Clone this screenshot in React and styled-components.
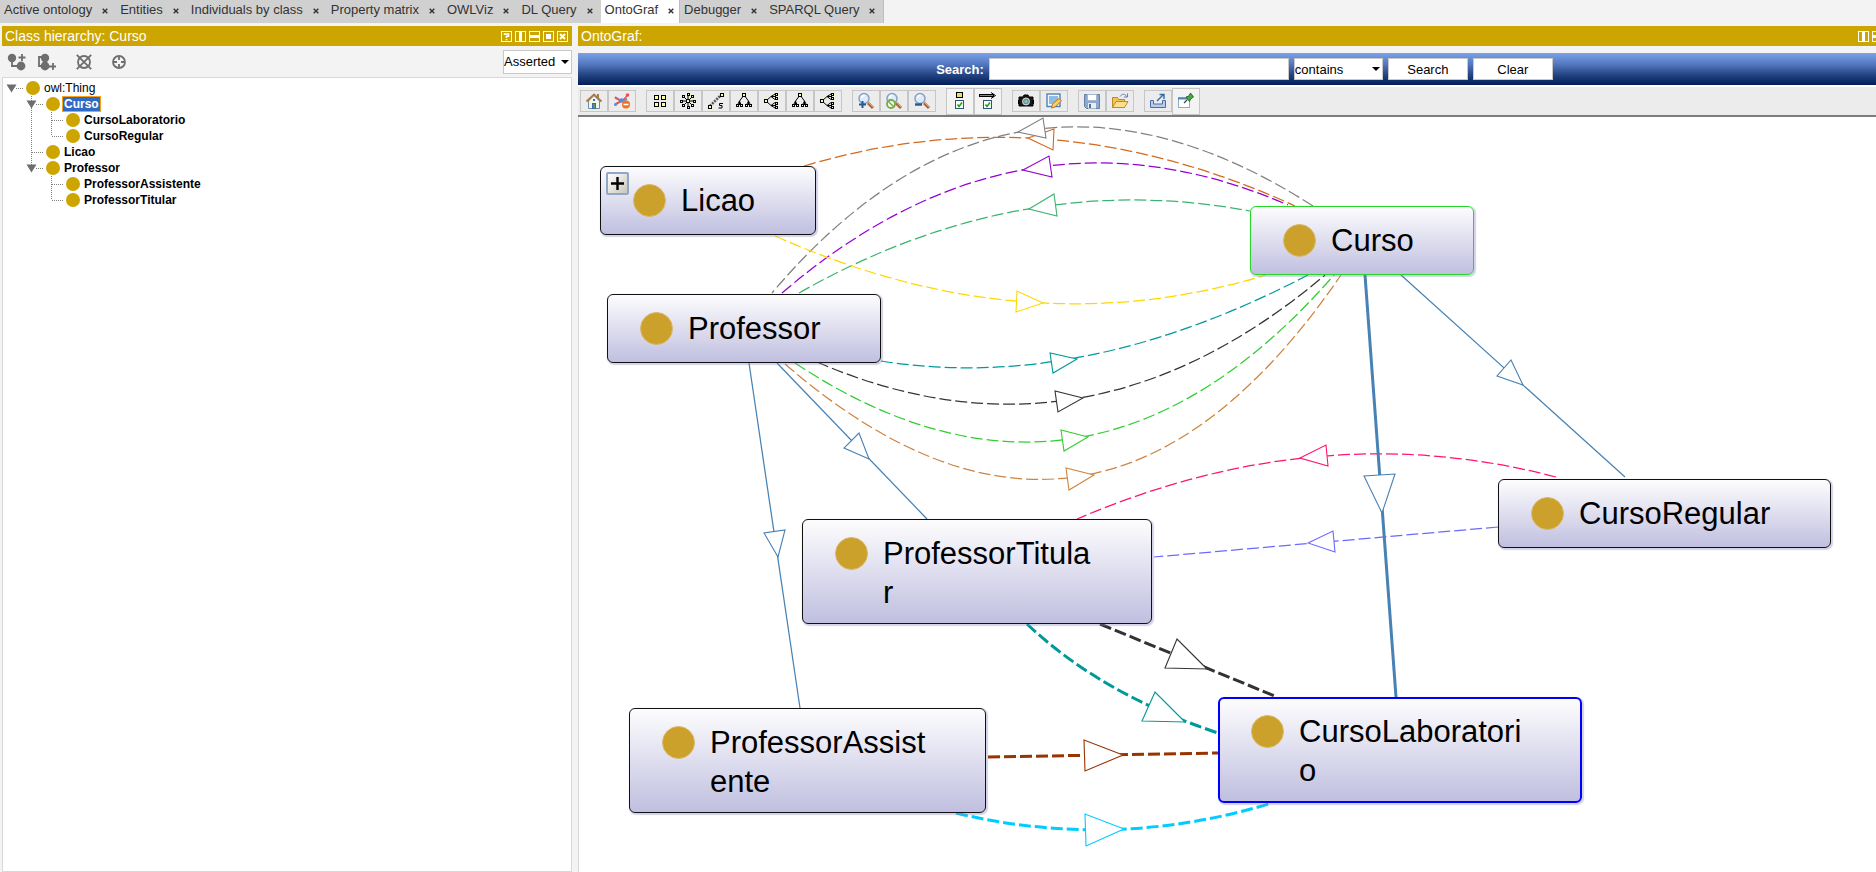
import React from "react";
import styled, { createGlobalStyle, css } from "styled-components";

const GlobalStyle = createGlobalStyle`
  *, *::before, *::after { box-sizing: border-box; }
  body { margin: 0; background: #f3f3f3; overflow: hidden; }
  body, button, input, select { font-family: "Liberation Sans", Arial, sans-serif; }
`;

const GOLD = "#cda500";

/* The workspace is a little wider than the window, so its right edge runs off screen. */
const Workspace = styled.div`
  display: flex;
  flex-direction: column;
  gap: 3px;
  width: calc(100% + 39px);
  height: 100vh;
`;

const TabBar = styled.nav`
  display: flex;
  height: 23px;
`;

const Tab = styled.div`
  display: flex;
  align-items: center;
  gap: 10px;
  padding: 0 ${(p) => (p.$active ? 5 : 8)}px 4px 4px;
  background: ${(p) => (p.$active ? "#fff" : "#d0d0d0")};
  ${(p) => (p.$last || p.$active) && css`border-right: 1px solid #bdbdbd;`}
`;

const TabLink = styled.a`
  color: #333;
  font-size: 13px;
  line-height: 16px;
  text-decoration: none;
  white-space: nowrap;
`;

const TabClose = styled.button`
  display: flex;
  padding: 2px 0 0;
  border: 0;
  background: none;
`;

const Panels = styled.main`
  display: flex;
  flex: 1;
  gap: 6px;
  min-height: 0;
  padding-left: 2px;
`;

const HierarchyPanel = styled.section`
  display: flex;
  flex-direction: column;
  flex: 0 0 570px;
`;

const GraphPanel = styled.section`
  display: flex;
  flex-direction: column;
  flex: 1;
  min-width: 0;
`;

const PanelHeader = styled.header`
  display: flex;
  flex: none;
  align-items: center;
  justify-content: space-between;
  height: 20px;
  padding: 0 4px 0 3px;
  background: ${GOLD};
`;

const PanelTitle = styled.h2`
  margin: 0;
  color: #fff;
  font-size: 14px;
  font-weight: 400;
  line-height: 20px;
`;

const HeaderButtons = styled.div`
  display: flex;
  gap: 3px;
`;

const PlainButton = styled.button`
  display: flex;
  padding: 0;
  border: 0;
  background: none;
`;

const HierarchyTools = styled.div`
  display: flex;
  flex: none;
  align-items: center;
  justify-content: space-between;
  height: 31px;
  padding-left: 5px;
`;

const ToolCluster = styled.div`
  display: flex;
  align-items: center;
  gap: ${(p) => p.$gap}px;
`;

const SelectBox = styled.span`
  display: grid;
  align-items: center;
  width: ${(p) => p.$width}px;
  height: ${(p) => p.$height}px;
  border: 1px solid #c8c8c8;
  background: #fff;
  & > * { grid-area: 1 / 1; }
  & > svg { justify-self: end; margin-right: 1px; pointer-events: none; }
`;

const Select = styled.select`
  appearance: none;
  width: 100%;
  height: 100%;
  padding: 0;
  border: 0;
  background: none;
  color: #000;
  font-size: 13px;
`;

const TreeView = styled.div`
  flex: 1;
  padding: 2px 1px;
  border: 1px solid #d8d8d8;
  background: #fff;
`;

const TreeRow = styled.div`
  display: flex;
  align-items: center;
  height: 16px;
`;

const TreeDot = styled.span`
  width: 14px;
  height: 14px;
  margin: 0 2px;
  border-radius: 50%;
  background: ${GOLD};
`;

const TreeLabel = styled.span`
  padding: 0 1px;
  border: 1px solid transparent;
  font-size: 12px;
  font-weight: ${(p) => (p.$bold ? 700 : 400)};
  line-height: 14px;
  ${(p) => p.$selected && css`
    border-color: #f5a11a;
    background: #316ac5;
    color: #fff;
  `}
`;

const SearchBar = styled.form`
  display: flex;
  flex: none;
  align-items: center;
  justify-content: center;
  gap: 5px;
  height: 32px;
  margin-top: 7px;
  padding-right: 4px;
  background: linear-gradient(#7aa2e8, #5478c0 35%, #22427f 70%, #001d58);
`;

const SearchLabel = styled.label`
  color: #fff;
  font-size: 13px;
  font-weight: 700;
`;

const SearchInput = styled.input`
  width: 300px;
  height: 22px;
  border: 1px solid #c8c8c8;
  background: #fff;
  font-size: 13px;
`;

const SearchButton = styled.button`
  width: 80px;
  height: 22px;
  padding: 0;
  border: 1px solid #c8c8c8;
  background: #fff;
  color: #000;
  font-size: 13px;
`;

const GraphToolbar = styled.div`
  display: flex;
  flex: none;
  align-items: center;
  gap: 10px;
  height: 32px;
  padding-left: 2px;
  border-top: 2px solid #fff;
  border-bottom: 2px solid #7c7c7c;
  background: #ececec;
`;

const ToolGroup = styled.div`
  display: flex;
  align-items: center;
`;

const ToolButton = styled.button`
  display: flex;
  align-items: center;
  justify-content: center;
  width: 28px;
  height: ${(p) => (p.$pressed ? 27 : 22)}px;
  padding: 0;
  border: 1px solid #c6c6c6;
  background: ${(p) => (p.$pressed ? "#f3f3f3" : "#ececec")};
`;

const Canvas = styled.div`
  position: relative;
  flex: 1;
  overflow: hidden;
  border-left: 1px solid #d8d8d8;
  background: #fff;
`;

const EdgeLayer = styled.svg`
  display: block;
  width: 100%;
  height: 100%;
`;

const GraphNode = styled.article`
  position: absolute;
  left: ${(p) => p.$x}px;
  top: ${(p) => p.$y}px;
  display: flex;
  align-items: flex-start;
  gap: 15px;
  width: ${(p) => p.$w}px;
  height: ${(p) => p.$h}px;
  padding: 14px 53px 0 32px;
  border: 1px solid ${(p) => p.$border};
  border-radius: 6px;
  background: linear-gradient(#fdfdfe, #c0bfe0);
  box-shadow: 1px 1px 1px 1px rgba(130, 130, 190, 0.35);
  ${(p) => p.$thick && css`
    padding: 13px 52px 0 31px;
    border-width: 2px;
  `}
`;

const NodeDot = styled.span`
  flex: none;
  width: 33px;
  height: 33px;
  margin-top: 3px;
  border-radius: 50%;
  border: 1px solid #d8b968;
  background: #cba02b;
`;

const NodeName = styled.span`
  flex: 1;
  color: #000;
  font-size: 31px;
  line-height: 39px;
  word-break: break-all;
`;

const ExpandButton = styled.button`
  position: absolute;
  left: 5px;
  top: 5px;
  display: flex;
  align-items: center;
  justify-content: center;
  width: 23px;
  height: 23px;
  padding: 0;
  border: 2px solid #8fa9c4;
  border-radius: 2px;
  background: linear-gradient(135deg, #fff, #cbc6bd);
`;

/* ---------- icons ---------- */

const Caret = () => (
  <svg width="10" height="6" viewBox="0 0 10 6"><path d="M1 1h8L5 5z" fill="#000" /></svg>
);

const CloseGlyph = () => (
  <svg width="6" height="6" viewBox="0 0 6 6"><path d="M.7 .7l4.6 4.6M5.3 .7L.7 5.3" stroke="#333" strokeWidth="1.4" /></svg>
);

const headerShapes = {
  help: <path d="M3.5 4V3h4v2.2H5.5V7M5.5 8v1.2" fill="none" stroke="#fff" strokeWidth="1.6" />,
  splitV: <path d="M4 1h3v9H4z" fill="#fff" />,
  splitH: <path d="M1 4h9v3H1z" fill="#fff" />,
  max: <path d="M3 3h5v5H3z" fill="#fff" />,
  close: <path d="M3 3l5 5M8 3L3 8" stroke="#fff" strokeWidth="2" />,
};

const HeaderIcon = ({ name }) => (
  <svg width="11" height="11" viewBox="0 0 11 11">
    <rect x=".5" y=".5" width="10" height="10" fill="none" stroke="#fff" />
    {headerShapes[name]}
  </svg>
);

const G = "#6e6e6e";
const AddSubIcon = () => (
  <svg width="20" height="18" viewBox="0 0 20 18">
    <circle cx="5" cy="5" r="4.2" fill={G} /><circle cx="14" cy="13" r="4.4" fill={G} />
    <path d="M5 5v8h8M15 1v7M11.5 4.5h7" fill="none" stroke={G} strokeWidth="1.8" />
  </svg>
);
const AddSiblingIcon = () => (
  <svg width="20" height="18" viewBox="0 0 20 18">
    <circle cx="8" cy="5" r="4.2" fill={G} /><circle cx="8" cy="13" r="4.4" fill={G} />
    <path d="M7 4H2v9h6M16 10v7M11 13.5h8" fill="none" stroke={G} strokeWidth="1.8" />
  </svg>
);
const DeleteIcon = () => (
  <svg width="16" height="16" viewBox="0 0 16 16" fill="none" stroke={G} strokeWidth="1.8">
    <circle cx="8" cy="8" r="6" /><path d="M.8 .8l14.4 14.4M15.2 .8L.8 15.2" />
  </svg>
);
const TargetIcon = () => (
  <svg width="16" height="16" viewBox="0 0 16 16" fill="none" stroke={G} strokeWidth="1.8">
    <circle cx="8" cy="8" r="6" /><path d="M8 2v4M8 10v4M2 8h4M10 8h4" />
  </svg>
);

const Cell = ({ x, y, s = 3 }) => (
  <rect x={x + 0.5} y={y + 0.5} width={s} height={s} fill="#ffff9c" stroke="#000" />
);
const Icon = ({ children }) => (
  <svg width="18" height="18" viewBox="0 0 18 18" fill="none">{children}</svg>
);

const TreeDown = (
  <Icon>
    <path d="M9 3L4.5 9v4M9 3l4.5 6v4M4.5 9L2 14M4.500 9l2 5M13.5 9l-2.5 5M13.5 9l2.5 5" stroke="#000" />
    <Cell x={7} y={1} /><Cell x={1} y={12} s={2} /><Cell x={5} y={12} s={2} /><Cell x={10} y={12} s={2} /><Cell x={14} y={12} s={2} />
  </Icon>
);
const TreeRight = (
  <Icon>
    <path d="M3 9l5-4.500h5M3 9l5 4.500h5M8 4.500l4-2.500M8 4.500l4 3M8 13.500l4-3M8 13.500l4 2.500" stroke="#000" />
    <Cell x={1} y={7} /><Cell x={12} y={1} s={2} /><Cell x={12} y={5} s={2} /><Cell x={12} y={10} s={2} /><Cell x={12} y={14} s={2} />
  </Icon>
);
const Magnifier = ({ children }) => (
  <Icon>
    <path d="M11 11l5 5" stroke="#a8683c" strokeWidth="3" /><path d="M11 10l5 5" stroke="#e0a878" />
    <circle cx="7" cy="6.5" r="5" fill="#dcecfc" stroke="#8aa0c4" strokeWidth="1.5" />
    <path d="M4.500 6a3 3 0 0 1 3-2.500" stroke="#fff" strokeWidth="1.5" />
    {children}
  </Icon>
);
const CheckBoxShape = () => (
  <>
    <rect x="4.5" y="8.5" width="8" height="8" fill="#fff" stroke="#2c5878" />
    <path d="M6.500 12.500l1.500 2 3-4" stroke="#18a018" strokeWidth="1.5" />
  </>
);

const toolIcons = {
  home: (
    <Icon>
      <path d="M3.500 9v7.500h11V9L9 3.500z" fill="#f4f4e8" stroke="#6c8cb0" />
      <path d="M1.500 9.500L9 2.500l7.500 7" stroke="#a87848" strokeWidth="1.8" />
      <path d="M13 2v4" stroke="#a87848" strokeWidth="2" />
      <rect x="7.5" y="11.5" width="3" height="5" fill="#5c9c50" stroke="#3c6ca0" /><rect x="8" y="7" width="2" height="2" fill="#3c78b4" />
    </Icon>
  ),
  unlink: (
    <Icon>
      <path d="M2 5l6 4 6-2M2 13l6-4" stroke="#5c8cd8" strokeWidth="2" />
      <path d="M2 12l7-3 6-6M9 9L2 6" stroke="#f05050" strokeWidth="1.5" />
      <circle cx="2.5" cy="12.5" r="1.5" fill="#5c8cd8" /><circle cx="14.5" cy="3" r="1.8" fill="#f05050" /><circle cx="8.5" cy="8.5" r="2.2" fill="#5c8cd8" />
      <circle cx="13" cy="12.5" r="4" fill="#f07020" /><path d="M10.500 12.500h5" stroke="#fff" strokeWidth="1.6" />
    </Icon>
  ),
  grid: <Icon><Cell x={3} y={3} s={4} /><Cell x={10} y={3} s={4} /><Cell x={3} y={10} s={4} /><Cell x={10} y={10} s={4} /></Icon>,
  radial: (
    <Icon>
      <path d="M9 2v14M2 9h14M4 4l10 10M14 4L4 14" stroke="#000" />
      <Cell x={7} y={7} s={3} />
      <Cell x={8} y={1} s={2} /><Cell x={8} y={14} s={2} /><Cell x={1} y={8} s={2} /><Cell x={14} y={8} s={2} />
      <Cell x={3} y={3} s={2} /><Cell x={12} y={3} s={2} /><Cell x={3} y={12} s={2} /><Cell x={12} y={12} s={2} />
    </Icon>
  ),
  spring: (
    <Icon>
      <path d="M3 14L14 3" stroke="#555" strokeWidth="2.6" strokeDasharray="2 1" />
      <Cell x={1} y={13} /><Cell x={13} y={1} />
      <path d="M16 11.500h-3.500v2H15v2.500h-3.500" stroke="#000" />
    </Icon>
  ),
  treeDown: TreeDown,
  treeRight: TreeRight,
  zoomIn: <Magnifier><path d="M5.500 9v7M2 12.500h7" stroke="#245c90" strokeWidth="2" /></Magnifier>,
  zoomReset: <Magnifier><circle cx="6" cy="12" r="4" fill="#f4faec" stroke="#78a848" strokeWidth="1.8" /><path d="M3.500 9.500l5 5" stroke="#78a848" strokeWidth="1.5" /></Magnifier>,
  zoomOut: <Magnifier><path d="M2 12.500h7" stroke="#245c90" strokeWidth="2.4" /></Magnifier>,
  nodeFilter: <Icon><rect x="5.5" y=".5" width="6" height="5" fill="#e8e060" stroke="#000" /><CheckBoxShape /></Icon>,
  arcFilter: <Icon><path d="M0 3.500h15" stroke="#000" strokeWidth="3" /><path d="M1 3.500h13" stroke="#20a8e0" /><path d="M12 .5l4.500 3-4.500 3" stroke="#000" /><CheckBoxShape /></Icon>,
  camera: (
    <Icon>
      <path d="M2 5h4l1-2h4l1 2h4v9H2z" fill="#181818" stroke="#000" /><path d="M1.500 8v4M16.500 8v4" stroke="#000" />
      <circle cx="9" cy="9.5" r="3.5" fill="#888" stroke="#ddd" /><circle cx="9" cy="9.5" r="1.5" fill="#50d8e0" />
    </Icon>
  ),
  editImage: (
    <Icon>
      <rect x="2" y="2" width="13" height="12.5" fill="#f4f8fc" stroke="#4c80bc" strokeWidth="1.4" /><path d="M4 4h9v8H4z" fill="#8cbce8" />
      <path d="M6.500 16l1-4 6.500-5.500 2.500 2.500-6.500 6z" fill="#fccc60" stroke="#b87828" />
    </Icon>
  ),
  save: (
    <Icon>
      <path d="M1.500 2.500h15v14h-13l-2-2z" fill="#8ca8d0" stroke="#64809c" />
      <rect x="4.5" y="2.5" width="9" height="6" fill="#fff" stroke="#a4b8d0" /><rect x="5" y="11" width="8" height="5.5" fill="#e8eef4" /><path d="M7 12v4" stroke="#58708c" strokeWidth="2" />
    </Icon>
  ),
  open: (
    <Icon>
      <path d="M1.500 15.500v-10h5l1 2h6v8z" fill="#f4c458" stroke="#c08828" /><path d="M1.500 15.500L5 9.500h12l-3.500 6z" fill="#fce08c" stroke="#c08828" />
      <path d="M9 4.500c2-3 5-3 6.500 0M16.500 1.500v3.500h-3.500" stroke="#5c80b0" />
    </Icon>
  ),
  exportGraph: (
    <Icon>
      <path d="M4.500 8.500h-3v7h15v-7h-3v3.500h-9z" fill="#b8ccec" stroke="#4c6cac" />
      <path d="M8 9l6-6M10.500 2.500H15V7" stroke="#2c6ca8" strokeWidth="1.4" />
    </Icon>
  ),
  pin: (
    <Icon>
      <rect x="1.5" y="5.5" width="11" height="10" fill="#fff" stroke="#8cacc8" /><path d="M1 6.500h11" stroke="#4c88c0" strokeWidth="2" />
      <path d="M7 11l3-3" stroke="#444" strokeWidth="1.3" /><path d="M9 5l3.500 4.500 1-2.500 3-2-3-4-1.500 3z" fill="#48a848" stroke="#287028" />
    </Icon>
  ),
};

const toolGroups = [
  [["home", "Home"], ["unlink", "Clear links"]],
  [["grid", "Grid"], ["radial", "Radial"], ["spring", "Spring"], ["treeDown", "Vertical tree"], ["treeRight", "Horizontal tree"], ["treeDown", "Vertical directed"], ["treeRight", "Horizontal directed"]],
  [["zoomIn", "Zoom in"], ["zoomReset", "No zoom"], ["zoomOut", "Zoom out"]],
  [["nodeFilter", "Node types", true], ["arcFilter", "Arc types", true]],
  [["camera", "Snapshot"], ["editImage", "Edit image"]],
  [["save", "Save"], ["open", "Open"]],
  [["exportGraph", "Export"], ["pin", "Pin tooltips", true]],
];

/* ---------- class tree ---------- */

const DOTS = { stroke: "#808080", strokeDasharray: "1 1" };
const Guide = ({ kind }) => {
  const open = kind.startsWith("open");
  const upper = ["openMid", "openLast", "tee", "ell", "vert"].includes(kind);
  const lower = ["openMid", "tee", "vert"].includes(kind);
  const across = open || kind === "tee" || kind === "ell";
  return (
    <svg width="20" height="16" viewBox="0 0 20 16" shapeRendering={open ? "auto" : "crispEdges"}>
      {upper && <path d="M7.500 0v8" {...DOTS} />}
      {lower && <path d="M7.500 8v8" {...DOTS} />}
      {across && <path d={`M${open ? 12 : 8} 8.500H19`} {...DOTS} />}
      {open && <path d="M2.500 4.500h10L7.500 12.500z" fill="#6e6e6e" />}
    </svg>
  );
};

const treeRows = [
  { label: "owl:Thing", guides: ["openRoot"], plain: true },
  { label: "Curso", guides: ["blank", "openMid"], selected: true },
  { label: "CursoLaboratorio", guides: ["blank", "vert", "tee"] },
  { label: "CursoRegular", guides: ["blank", "vert", "ell"] },
  { label: "Licao", guides: ["blank", "tee"] },
  { label: "Professor", guides: ["blank", "openLast"] },
  { label: "ProfessorAssistente", guides: ["blank", "blank", "tee"] },
  { label: "ProfessorTitular", guides: ["blank", "blank", "ell"] },
];

/* ---------- graph ---------- */

const ORIGIN = { x: 579, y: 117 };

const nodes = [
  { name: "Licao", x: 600, y: 166, w: 216, h: 69, expandable: true },
  { name: "Professor", x: 607, y: 294, w: 274, h: 69 },
  { name: "Curso", x: 1250, y: 206, w: 224, h: 69, border: "#28d828" },
  { name: "CursoRegular", x: 1498, y: 479, w: 333, h: 69 },
  { name: "ProfessorTitular", x: 802, y: 519, w: 350, h: 105 },
  { name: "ProfessorAssistente", x: 629, y: 708, w: 357, h: 105 },
  { name: "CursoLaboratorio", x: 1218, y: 697, w: 364, h: 106, border: "#0000ff", thick: true },
];

/* d: the line; head: tip first, then the two corners of the arrow's base */
const edges = [
  { color: "#d2691e", dash: true, d: "M804 166Q1049 93 1295 206", head: "1028,138 1054,129 1053,150" },
  { color: "#808080", dash: true, d: "M1313 206Q1010 12 772 293", head: "1018,132 1043,118 1046,138" },
  { color: "#9400d3", dash: true, d: "M782 293Q1020 89 1288 205", head: "1023,170 1049,156 1052,177" },
  { color: "#3cb371", dash: true, d: "M799 293Q1019 168 1250 211", head: "1029,209 1054,194 1057,216" },
  { color: "#ffd700", dash: true, d: "M775 236Q1026 348 1266 275", head: "1043,303 1017,291 1016,312" },
  { color: "#009999", dash: true, d: "M881 361Q1082 393 1308 275", head: "1077,359 1050,353 1053,373" },
  { color: "#333333", dash: true, d: "M817 362Q1085 478 1325 275", head: "1083,398 1055,391 1058,412" },
  { color: "#32cd32", dash: true, d: "M795 363Q1088 557 1334 275", head: "1088,437 1061,430 1064,451" },
  { color: "#cd853f", dash: true, d: "M785 364Q1096 633 1341 275", head: "1094,475 1066,468 1069,490" },
  { color: "#4682b4", d: "M777 363L927 519", head: "869,459 859,433 844,448" },
  { color: "#4682b4", d: "M749 363L800 708", head: "778,557 764,533 785,530" },
  { color: "#4682b4", d: "M1401 275L1625 477", head: "1523,385 1511,360 1497,376" },
  { color: "#ff1470", dash: true, d: "M1556 477Q1320 415 1077 519", head: "1300,458 1326,445 1328,466" },
  { color: "#6a6aff", dash: true, d: "M1498 527L1154 557", head: "1308,543 1333,531 1335,552" },
  { color: "#4682b4", thick: true, d: "M1365 275L1396 697", head: "1382,513 1364,476 1395,474" },
  { color: "#333333", dash: true, thick: true, d: "M1100 624L1277 697", head: "1207,669 1177,639 1165,668" },
  { color: "#009999", dash: true, thick: true, d: "M1027 624Q1101 694 1218 733", head: "1185,722 1155,692 1142,721" },
  { color: "#993300", dash: true, thick: true, d: "M988 757L1218 753", head: "1123,755 1084,740 1085,771" },
  { color: "#00ccff", dash: true, thick: true, d: "M956 813Q1114 851 1272 803", head: "1124,829 1085,814 1086,846" },
];

const Edge = ({ edge }) => (
  <g fill="none" stroke={edge.color}>
    <path d={edge.d} strokeWidth={edge.thick ? 3 : 1.25} strokeDasharray={edge.dash ? "12 4" : undefined} />
    <polygon points={edge.head} fill="#fff" strokeWidth="1.1" />
  </g>
);

const tabs = ["Active ontology", "Entities", "Individuals by class", "Property matrix", "OWLViz", "DL Query", "OntoGraf", "Debugger", "SPARQL Query"];

const HeaderActions = ({ names }) => (
  <HeaderButtons>
    {names.map((name) => (
      <PlainButton key={name} type="button" aria-label={name}><HeaderIcon name={name} /></PlainButton>
    ))}
  </HeaderButtons>
);

export default function App() {
  return (
    <>
      <GlobalStyle />
      <Workspace>
        <TabBar>
          {tabs.map((name, i) => (
            <Tab key={name} $active={name === "OntoGraf"} $last={i === tabs.length - 1}>
              <TabLink href="#">{name}</TabLink>
              <TabClose type="button" aria-label={`Close ${name}`}><CloseGlyph /></TabClose>
            </Tab>
          ))}
        </TabBar>
        <Panels>
          <HierarchyPanel>
            <PanelHeader>
              <PanelTitle>Class hierarchy: Curso</PanelTitle>
              <HeaderActions names={["help", "splitV", "splitH", "max", "close"]} />
            </PanelHeader>
            <HierarchyTools>
              <ToolCluster $gap={19}>
                <ToolCluster $gap={10}>
                  <PlainButton type="button" aria-label="Add subclass"><AddSubIcon /></PlainButton>
                  <PlainButton type="button" aria-label="Add sibling class"><AddSiblingIcon /></PlainButton>
                </ToolCluster>
                <PlainButton type="button" aria-label="Delete class"><DeleteIcon /></PlainButton>
                <PlainButton type="button" aria-label="Locate class"><TargetIcon /></PlainButton>
              </ToolCluster>
              <SelectBox $width={69} $height={24}>
                <Select aria-label="Hierarchy view"><option>Asserted</option></Select>
                <Caret />
              </SelectBox>
            </HierarchyTools>
            <TreeView>
              {treeRows.map((row) => (
                <TreeRow key={row.label}>
                  {row.guides.map((kind, i) => <Guide key={i} kind={kind} />)}
                  <TreeDot />
                  <TreeLabel $bold={!row.plain} $selected={row.selected}>{row.label}</TreeLabel>
                </TreeRow>
              ))}
            </TreeView>
          </HierarchyPanel>
          <GraphPanel>
            <PanelHeader>
              <PanelTitle>OntoGraf:</PanelTitle>
              <HeaderActions names={["splitV", "splitH", "max", "close"]} />
            </PanelHeader>
            <SearchBar onSubmit={(e) => e.preventDefault()}>
              <SearchLabel htmlFor="graph-search">Search:</SearchLabel>
              <SearchInput id="graph-search" type="text" />
              <SelectBox $width={89} $height={22}>
                <Select aria-label="Match mode"><option>contains</option></Select>
                <Caret />
              </SelectBox>
              <SearchButton type="submit">Search</SearchButton>
              <SearchButton type="reset">Clear</SearchButton>
            </SearchBar>
            <GraphToolbar>
              {toolGroups.map((group, i) => (
                <ToolGroup key={i}>
                  {group.map(([icon, label, pressed]) => (
                    <ToolButton key={label} type="button" aria-label={label} $pressed={pressed}>
                      {toolIcons[icon]}
                    </ToolButton>
                  ))}
                </ToolGroup>
              ))}
            </GraphToolbar>
            <Canvas>
              <EdgeLayer>
                <g transform={`translate(${-ORIGIN.x} ${-ORIGIN.y})`}>
                  {edges.map((edge) => <Edge key={edge.d} edge={edge} />)}
                </g>
              </EdgeLayer>
              {nodes.map((n) => (
                <GraphNode key={n.name} $x={n.x - ORIGIN.x} $y={n.y - ORIGIN.y} $w={n.w} $h={n.h} $border={n.border || "#111"} $thick={n.thick}>
                  {n.expandable && (
                    <ExpandButton type="button" aria-label="Expand">
                      <svg width="15" height="15" viewBox="0 0 15 15"><path d="M7.500 1v13M1 7.500h13" stroke="#000" strokeWidth="2.4" /></svg>
                    </ExpandButton>
                  )}
                  <NodeDot />
                  <NodeName>{n.name}</NodeName>
                </GraphNode>
              ))}
            </Canvas>
          </GraphPanel>
        </Panels>
      </Workspace>
    </>
  );
}
